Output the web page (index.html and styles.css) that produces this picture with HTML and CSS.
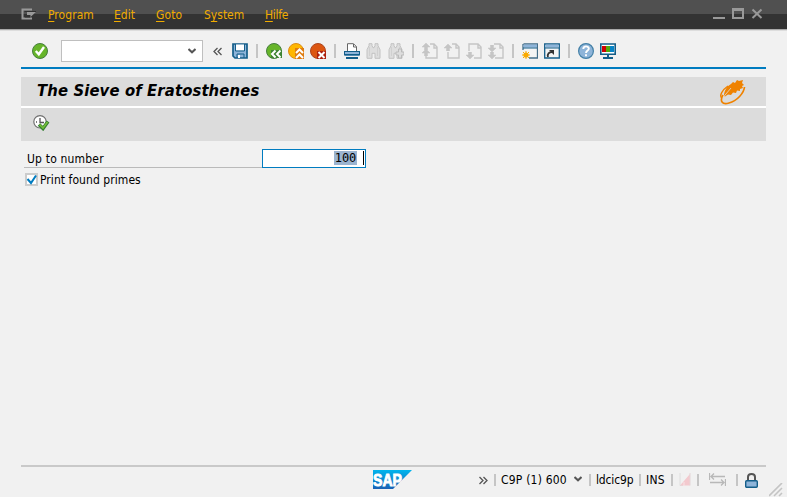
FILE: index.html
```html
<!DOCTYPE html>
<html lang="en">
<head>
<meta charset="utf-8">
<title>The Sieve of Eratosthenes</title>
<link rel="stylesheet" href="styles.css">
</head>
<body>
<svg class="defs" aria-hidden="true">
  <symbol id="page" viewBox="0 0 16 16"><path d="M8 1h4l3 3v11H4v-4M12 1v4h3" fill="none" stroke="#c5c5c5" stroke-width="1.4"/></symbol>
  <symbol id="up" viewBox="0 0 8 7"><path d="M4 0L8 4H5.500V7H2.500V4H0z" fill="#c5c5c5" stroke="#c5c5c5" stroke-width=".5"/></symbol>
  <symbol id="down" viewBox="0 0 8 7"><path d="M2.500 0h3v3H8L4 7 0 3h2.500z" fill="#c5c5c5" stroke="#c5c5c5" stroke-width=".5"/></symbol>
  <symbol id="binoculars" viewBox="0 0 16 16"><path d="M3 .7h3v2l1 2h1l1-2v-2h3v2l2 4v8.600H9v-5H6v5H1V6.700l2-4z" fill="#dedede" stroke="#c2c2c2"/><path d="M3.500 4v9M11.500 4v9" stroke="#d0d0d0"/></symbol>
  <symbol id="chevron" viewBox="0 0 8 6"><path d="M0.500 1l3.500 3.300 3.500-3.300" fill="none" stroke="#555" stroke-width="2"/></symbol>
</svg>

<header class="menubar">
  <svg class="menu-icon" viewBox="0 0 16 12"><path d="M11 1.500H1.500v9H11" fill="none" stroke="#999" stroke-width="2"/><path d="M3.500 3.500H15L9 9H4" fill="none" stroke="#303030"/><path d="M6 4h9L9.500 9V7H6z" fill="#999"/></svg>
  <nav class="menus">
    <a class="m-program"><u>P</u>rogram</a><a class="m-edit"><u>E</u>dit</a><a class="m-goto"><u>G</u>oto</a><a class="m-system">S<u>y</u>stem</a><a class="m-hilfe"><u>H</u>ilfe</a>
  </nav>
  <svg class="window-buttons" viewBox="0 0 50 12"><path d="M0 10h12" stroke="#999" stroke-width="2"/><path d="M20 1.500v8.500h10V1.500" fill="none" stroke="#999" stroke-width="2"/><path d="M19 1.500h12" stroke="#999" stroke-width="3"/><path d="M39.500 1.500l9 8.500M48.500 1.500l-9 8.500" stroke="#999" stroke-width="2"/></svg>
</header>

<main class="window">
  <div class="toolbar">
    <svg class="icon" viewBox="0 0 16 16"><circle cx="8" cy="8" r="7.500" fill="#67b52a" stroke="#477e3e"/><path d="M3.800 8l3 3.300L12 4" fill="none" stroke="#fff" stroke-width="2.400"/></svg>
    <div class="command"><svg class="chevron"><use href="#chevron"/></svg></div>
    <svg class="collapse" viewBox="0 0 9 9"><path d="M4.500 1L1 4.500 4.500 8M8.500 1L5 4.500 8.500 8" fill="none" stroke="#555" stroke-width="1.300"/></svg>
    <svg class="icon" viewBox="0 0 16 16"><path d="M1 1h14v14H3l-2-2z" fill="#8eb4d9" stroke="#145e89" stroke-width="1.700"/><path d="M4 1.500h8v6H4z" fill="#fff"/><path d="M3.500 1v7h9V1M5 15v-4h7v4" fill="none" stroke="#145e89"/><path d="M6 12h2v3H6z" fill="#fff"/></svg>
    <i class="sep"></i>
    <svg class="icon" viewBox="0 0 16 16"><circle cx="8" cy="8" r="7.500" fill="#67b52a" stroke="#477e3e"/><path d="M5 7h11v8H5z" fill="#3f8435"/><path d="M9.500 7.500L6 11l3.500 3.500M14.500 7.500L11 11l3.500 3.500" fill="none" stroke="#fff" stroke-width="2"/></svg>
    <svg class="icon" viewBox="0 0 16 16"><circle cx="8" cy="8" r="7.500" fill="#ffb700" stroke="#dc8c17"/><path d="M7 5h9v11H7z" fill="#df7c10"/><path d="M8 10l3.500-3.500L15 10M8 15l3.500-3.500L15 15" fill="none" stroke="#fff" stroke-width="2"/></svg>
    <svg class="icon" viewBox="0 0 16 16"><circle cx="8" cy="8" r="7.500" fill="#dc5611" stroke="#ac4620"/><path d="M7 8h9v8H7z" fill="#ad210e"/><path d="M8.500 9l6 6M14.500 9l-6 6" stroke="#fff" stroke-width="2"/></svg>
    <i class="sep"></i>
    <svg class="icon" viewBox="0 0 16 16"><path d="M3.500 8V.7h6l3 3V8" fill="#fff" stroke="#666"/><path d="M9.500 1v3h3" fill="none" stroke="#666"/><path d="M1 8h14v5H1z" fill="#8eb4d9"/><path d="M0 8h16v1H0zM0 11h16v1.500H0zM0 8h1v4H0zM15 8h1v4h-1z" fill="#145e89"/><path d="M2 14h12v2H2z" fill="#145e89"/></svg>
    <svg class="icon"><use href="#binoculars"/></svg>
    <svg class="icon" viewBox="0 0 16 16"><use href="#binoculars" width="16" height="16"/><path d="M10.500 6h3v3H16v3h-2.500v3h-3v-3H8V9h2.500z" fill="#ddd" stroke="#bbb"/></svg>
    <i class="sep"></i>
    <svg class="icon" viewBox="0 0 16 16"><use href="#page" width="16" height="16"/><use href="#up" width="8" height="7"/><use href="#up" y="6" width="8" height="7"/></svg>
    <svg class="icon" viewBox="0 0 16 16"><path d="M8 1h4l3 3v11H4V9M12 1v4h3" fill="none" stroke="#c5c5c5" stroke-width="1.400"/><use href="#up" y="1" width="8" height="7"/></svg>
    <svg class="icon" viewBox="0 0 16 16"><path d="M3 8V1h9l3 3v11H8M12 1v4h3" fill="none" stroke="#c5c5c5" stroke-width="1.400"/><use href="#down" y="9" width="8" height="7"/></svg>
    <svg class="icon" viewBox="0 0 16 16"><path d="M6 1h6l3 3v11H7M12 1v4h3" fill="none" stroke="#c5c5c5" stroke-width="1.400"/><use href="#down" y="2" width="8" height="7"/><use href="#down" y="9" width="8" height="7"/></svg>
    <i class="sep"></i>
    <svg class="icon" viewBox="0 0 16 16"><path d="M1.500 1h14v14H7M1 1v6" fill="#f4f4f4" stroke="#446d89" stroke-width="1.300"/><path d="M1.500 1.500h13.500v3H1.500z" fill="#8eb4d9"/><path d="M1 5h14" stroke="#145e89"/><circle cx="4" cy="12" r="2.600" fill="#f9a900"/><path d="M4 8v8M0 12h8M1 9l6 6M7 9l-6 6" stroke="#f9a900"/></svg>
    <svg class="icon" viewBox="0 0 16 16"><path d="M.7 1h14.600v14H.7z" fill="#f4f4f4" stroke="#145e89" stroke-width="1.300"/><path d="M1.500 1.500h13v3h-13z" fill="#8eb4d9"/><path d="M1 5h14" stroke="#145e89"/><path d="M4 14c-1-3 1-5 4-5" fill="none" stroke="#333" stroke-width="1.800"/><path d="M5 7h5v5z" fill="#333"/></svg>
    <i class="sep"></i>
    <svg class="icon" viewBox="0 0 16 16"><circle cx="8" cy="8" r="7.400" fill="#8eb4d9" stroke="#4480a7" stroke-width="1.200"/><path d="M5.300 6c0-3.500 5.500-3.500 5.500-.3C10.800 7.500 8 7.700 8 10M8 11.300v2" fill="none" stroke="#fff" stroke-width="1.900"/></svg>
    <svg class="icon" viewBox="0 0 16 16"><path d="M.8 1h14.400v10.300H.8z" fill="#fff" stroke="#145e89" stroke-width="1.600"/><path d="M2 3h4v6H2z" fill="#d00000"/><path d="M6 3h4v6H6z" fill="#55a90b"/><path d="M10 3h4v6h-4z" fill="#0784c6"/><path d="M8 12v3M3 15h10" stroke="#145e89" stroke-width="2"/></svg>
  </div>

  <div class="titlebar">
    <h1>The Sieve of Eratosthenes</h1>
    <svg class="emblem" viewBox="0 0 26 26"><path d="M4 17C4 12 7 7 11 5l2-2 2 1 2-3 2 1 4-1-1 3 2 2-2 1 1 2-3 1 0 2-3-.5-1 2.500-3-.5-2 2.500-3-.5-3 2z" fill="#ef8200"/><path d="M3 16C-.5 22 2 26 9 24c8-2 15-10 15.500-16" fill="none" stroke="#ef8200" stroke-width="1.700"/><path d="M8 7C2 11-1 17 2 19" fill="none" stroke="#ef8200" stroke-width="1.500"/><path d="M3 18.500L11 9" stroke="#dcdcdc" stroke-width=".8"/></svg>
  </div>
  <div class="actions">
    <svg class="execute" viewBox="0 0 17 16"><circle cx="7" cy="6.800" r="6.200" fill="#fff" stroke="#707070" stroke-width="1.200"/><path d="M7 3v4.500h4M3 7h1" fill="none" stroke="#555" stroke-width="1.300"/><path d="M6 9.500l4 4L15 6.500" fill="none" stroke="#347e32" stroke-width="3.500"/><path d="M6.500 9.500l3.500 3.500 4.500-6" fill="none" stroke="#74bd38" stroke-width="1.700"/></svg>
  </div>

  <form class="form">
    <div class="field">
      <label class="t-upto">Up to number</label>
      <div class="number"><span class="selection">100</span><i class="caret"></i></div>
    </div>
    <div class="check-row">
      <svg class="checkbox" viewBox="0 0 13 13"><path d="M1 1h11v11H1z" fill="#fff" stroke="#ccc" stroke-width="2"/><path d="M2.500 6l3.500 4 5-7.500" fill="none" stroke="#007cc0" stroke-width="2"/></svg>
      <label class="t-print">Print found primes</label>
    </div>
  </form>

  <footer class="status">
    <svg class="sap" viewBox="0 0 39 20"><defs><linearGradient id="sapblue" x2="0" y2="1"><stop stop-color="#00b5ed"/><stop offset="1" stop-color="#1961b5"/></linearGradient></defs><path d="M0 0h39L20 19H0z" fill="url(#sapblue)"/><text x="0" y="15.500" textLength="29" lengthAdjust="spacingAndGlyphs">SAP</text></svg>
    <svg class="expand" viewBox="0 0 9 9"><path d="M.5 1L4 4.500.500 8M4.500 1L8 4.500 4.500 8" fill="none" stroke="#555" stroke-width="1.300"/></svg>
    <i class="sep"></i>
    <span class="system">C9P (1) 600</span>
    <svg class="chevron"><use href="#chevron"/></svg>
    <i class="sep"></i>
    <span class="host">ldcic9p</span>
    <i class="sep"></i>
    <span class="mode">INS</span>
    <i class="sep"></i>
    <svg class="signal" viewBox="0 0 12 13"><path d="M1 0v12.500h3" fill="none" stroke="#dedede"/><path d="M1 12.500L11 1v11.500z" fill="#f3c9ce"/><path d="M11 0v12.500" stroke="#e4d6d8"/><path d="M5 9v4" stroke="#f7e4e6"/></svg>
    <i class="sep"></i>
    <svg class="transfer" viewBox="0 0 17 13"><path d="M.5 0v7M16.500 6v7M2 3.500h14M1 9.500h14M5 .5L2 3.500l3 3M12 6.500l3 3-3 3" fill="none" stroke="#b8b8b8" stroke-width="1.300"/></svg>
    <i class="sep"></i>
    <svg class="lock" viewBox="0 0 13 15"><path d="M3 7V4c0-4 7-4 7 0v3" fill="none" stroke="#555" stroke-width="2"/><rect x=".7" y="7.700" width="11.600" height="6.600" rx="1" fill="#8eb4d9" stroke="#145e89" stroke-width="1.400"/></svg>
  </footer>
</main>
<svg class="grip" viewBox="0 0 14 14"><path d="M0 13L13 0M5 13l8-8M10 13l3-3" stroke="#c4c4c4" stroke-width="1.600"/></svg>
</body>
</html>
```
FILE: styles.css
```css
* { box-sizing: border-box; }
html, body { height: 100%; }
body {
  margin: 0;
  background: #f1f1f1;
  color: #000;
  font: 12px/16px "DejaVu Sans Condensed", "DejaVu Sans", sans-serif;
  font-stretch: condensed;
  display: flex;
  flex-direction: column;
  overflow: hidden;
  white-space: nowrap;
}
svg { display: block; flex: none; }
.defs { position: absolute; width: 0; height: 0; }

.menubar {
  height: 31px;
  flex: none;
  display: flex;
  align-items: flex-start;
  padding: 8px 24px 0 21px;
  background: linear-gradient(#505050 0 14px, #333 14px 29px, #aaa 29px 30px, #ddd 30px);
}
.menu-icon { width: 16px; height: 12px; }
.menus { display: flex; flex: 1; margin-left: 11px; color: #f0ab00; line-height: 14px; }
.menus a { flex: none; }
.menus u { text-underline-offset: 2px; }
.m-program { width: 66px; letter-spacing: .05px; }
.m-edit { width: 42px; }
.m-goto { width: 48px; letter-spacing: .1px; }
.m-system { width: 61px; }
.m-hilfe { letter-spacing: -.3px; }
.window-buttons { width: 50px; height: 12px; }

.window { flex: 1; display: flex; flex-direction: column; margin: 0 21px; min-height: 0; }
.toolbar {
  height: 38px;
  flex: none;
  display: flex;
  align-items: center;
  gap: 6px;
  padding: 4px 0 0 11px;
  border-bottom: 2px solid #007cc0;
}
.icon { width: 16px; height: 16px; }
.command {
  width: 142px;
  height: 22px;
  margin: 0 4px 0 7px;
  padding-right: 6px;
  border: 1px solid #bfbfbf;
  background: #fff;
  display: flex;
  align-items: center;
  justify-content: flex-end;
}
.chevron { width: 8px; height: 6px; }
.collapse { width: 9px; height: 9px; margin-right: 4px; }
.sep { flex: none; width: 2px; height: 14px; background: #c5c5c5; }
.toolbar .sep { margin: 0 2px; }

.titlebar {
  height: 29px;
  flex: none;
  margin-top: 8px;
  padding: 0 20px 0 16px;
  display: flex;
  align-items: center;
  justify-content: space-between;
  background: #dcdcdc;
}
h1 {
  margin: 0;
  padding-bottom: 2px;
  font: italic bold 16.5px/20px "DejaVu Sans Condensed", "DejaVu Sans", sans-serif;
  font-stretch: condensed;
  letter-spacing: .12px;
}
.emblem { width: 26px; height: 26px; }
.actions { height: 35px; flex: none; border-top: 2px solid #fff; background: #dcdcdc; padding: 7px 12px; }
.execute { width: 17px; height: 16px; }

.form { margin: 8px 0 0 3px; }
.field { display: flex; height: 19px; }
.t-upto { width: 238px; padding: 2px 0 0 3px; border-bottom: 1px solid #bababa; letter-spacing: .18px; }
.number {
  width: 104px;
  border: 1px solid #007cc0;
  background: #fff;
  display: flex;
  justify-content: flex-end;
  padding: 1px 1px 0 0;
}
.selection { width: 23px; height: 14px; background: #9bb4d0; font: 12px/14px "DejaVu Sans Mono", monospace; text-align: center; }
.caret { width: 1px; height: 14px; margin-left: 6px; background: #000; }
.check-row { display: flex; align-items: flex-start; gap: 2px; margin: 4px 0 0 1px; }
.checkbox { width: 13px; height: 13px; margin-top: 1px; }
.t-print { letter-spacing: .06px; }

.status {
  height: 32px;
  flex: none;
  margin-top: auto;
  display: flex;
  align-items: center;
  padding: 0 0 4px 352px;
  border-top: 2px solid #c9c9c9;
}
.status > * { flex: none; }
.status .sep { height: 12px; }
.sap { width: 39px; height: 20px; margin-top: -1px; }
.sap text { font: bold 17px "Liberation Sans", sans-serif; fill: #fff; stroke: #fff; stroke-width: .9px; }
.expand { width: 9px; height: 9px; margin: 0 6px 0 67px; }
.system { width: 73px; margin-left: 5px; letter-spacing: .2px; }
.status .chevron { margin: -2px 7px 0 0; }
.host { width: 43px; margin-left: 5px; letter-spacing: -.15px; }
.mode { width: 25px; margin-left: 5px; letter-spacing: .2px; }
.signal { width: 12px; height: 13px; margin: -2px 6px 0; }
.transfer { width: 17px; height: 13px; margin: -2px 10px 0; }
.lock { width: 13px; height: 15px; margin-left: 7px; }
.grip { position: absolute; right: 4px; bottom: 0; width: 14px; height: 14px; }
```
